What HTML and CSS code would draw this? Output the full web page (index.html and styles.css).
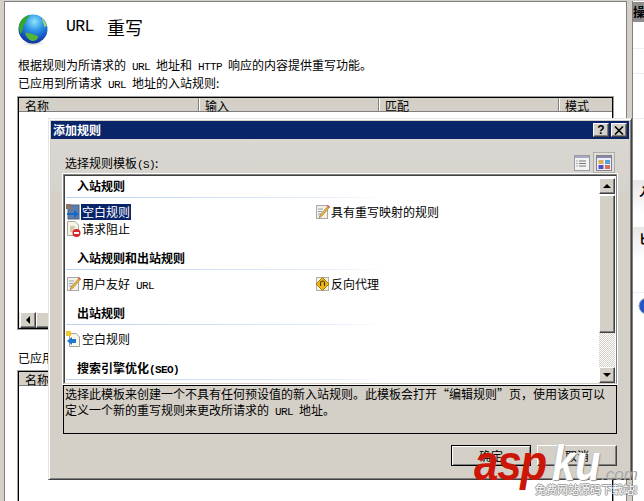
FILE: index.html
```html
<!DOCTYPE html>
<html lang="zh-CN">
<head>
<meta charset="utf-8">
<title>URL 重写</title>
<link rel="stylesheet" href="styles.css">
</head>
<body>
<div class="page">
  <main class="main">
    <header class="head">
      <svg class="globe" width="30" height="32" viewBox="0 0 30 32">
        <defs>
          <radialGradient id="gb" cx="0.55" cy="0.25" r="0.8">
            <stop offset="0" stop-color="#8fe4fa"/>
            <stop offset="0.4" stop-color="#2a95e6"/>
            <stop offset="0.8" stop-color="#1145b8"/>
            <stop offset="1" stop-color="#0b2a8c"/>
          </radialGradient>
          <radialGradient id="sh" cx="0.5" cy="0.5" r="0.5">
            <stop offset="0" stop-color="#777" stop-opacity=".5"/>
            <stop offset="1" stop-color="#999" stop-opacity="0"/>
          </radialGradient>
        </defs>
        <ellipse cx="15" cy="29" rx="12" ry="3" fill="url(#sh)"/>
        <circle cx="15" cy="15" r="14.5" fill="url(#gb)"/>
        <path d="M1.500 10C3 5 7 2 11 1C12 3 9 4 8 7C8 10 5 11 5 14C5 17 4 18 2.500 20C1 16 .5 13 1.500 10Z" fill="#35a62c"/>
        <path d="M7 19C11 18 16 21 20 22C21 25 17 27 14 27C11 26 8 23 7 19Z" fill="#52b53a"/>
        <path d="M24 4C26 6 28 9 29 12L26 13C27 10 24 8 24 4Z" fill="#a4d46c"/>
      </svg>
      <h1 class="title"><span class="lat-big">URL</span><span class="title-cn">重写</span></h1>
    </header>
    <p class="desc">根据规则为所请求的<span class="lat"> URL </span>地址和<span class="lat"> HTTP </span>响应的内容提供重写功能。</p>
    <p class="desc">已应用到所请求<span class="lat"> URL </span>地址的入站规则:</p>
    <section class="table table-top">
      <div class="thead">
        <div class="th th-a">名称</div>
        <div class="th th-b">输入</div>
        <div class="th th-c">匹配</div>
        <div class="th th-d">模式</div>
      </div>
      <div class="tbody"></div>
      <div class="hscroll">
        <div class="bevel hbtn"><span class="arrow-left"></span></div>
        <div class="bevel hthumb"></div>
      </div>
    </section>
    <p class="desc desc-second">已应用到所请求的出站规则:</p>
    <section class="table table-bottom">
      <div class="thead">
        <div class="th th-a">名称</div>
      </div>
    </section>
  </main>
  <div class="gutter"></div>
  <aside class="side">
    <div class="side-head">操作</div>
    <div class="side-row side-row-a"></div>
    <div class="side-row side-row-b"></div>
    <div class="side-row side-row-c"></div>
    <div class="side-band">入站</div>
    <div class="side-band side-band-b">匕</div>
    <div class="side-row side-row-d"></div>
    <svg class="side-dot" width="10" height="18" viewBox="0 0 10 18"><circle cx="9" cy="9" r="8" fill="#2456c8" stroke="#9ab" stroke-width="1"/></svg>
  </aside>
</div>

<div class="dialog">
  <div class="titlebar">
    <span class="dlg-title">添加规则</span>
    <div class="bevel tb-btn">?</div>
    <div class="bevel tb-btn tb-x">
      <svg width="10" height="9" viewBox="0 0 10 9"><path d="M1 0.500L9 8.500M9 0.500L1 8.500" stroke="#000" stroke-width="1.600"/></svg>
    </div>
  </div>
  <div class="dlg-body">
    <div class="pick-row">
      <span class="pick-label">选择规则模板<span class="lat">(S)</span>:</span>
      <div class="views">
        <div class="view">
          <svg width="16" height="16" viewBox="0 0 16 16"><rect x=".5" y=".5" width="15" height="15" fill="#f3f3f3" stroke="#9a9aa8"/><rect x="1" y="1" width="14" height="2" fill="#a8a8c0"/><path d="M5 6H12M5 8.500H12M5 11H12" stroke="#777"/><path d="M2 6H4M2 8.500H4M2 11H4" stroke="#aaa"/></svg>
        </div>
        <div class="view view-on">
          <svg width="16" height="16" viewBox="0 0 16 16"><rect x=".5" y=".5" width="15" height="15" fill="#eef" stroke="#80808f"/><rect x="1" y="1" width="14" height="2" fill="#8888a8"/><rect x="2.500" y="5" width="5" height="4" fill="#d8b050"/><rect x="9" y="5" width="5" height="4" fill="#58a0d8"/><rect x="2.500" y="10" width="5" height="4" fill="#5050c0"/><rect x="9" y="10" width="5" height="4" fill="#d87050"/></svg>
        </div>
      </div>
    </div>
    <div class="listbox">
      <div class="list">
        <h2 class="sec">入站规则</h2>
        <div class="items">
          <div class="item">
            <svg class="ico" width="15" height="16" viewBox="0 0 15 16"><rect x="2" y="1" width="11" height="14" fill="#5f7ca8" stroke="#4b5f80"/><rect x="0" y="0" width="5" height="5" fill="#8a7560"/><path d="M1 9H8V6L13 10L8 14V11H1Z" fill="#1569c7"/></svg>
            <span class="item-text is-selected">空白规则</span>
          </div>
          <div class="item">
            <svg class="ico" width="15" height="16" viewBox="0 0 15 16"><path d="M1.500 .5H9L12.500 4V14.500H1.500Z" fill="#f8f4e4" stroke="#a8a8a0"/><path d="M4 6H9M4 8H8M4 10H7" stroke="#b09a70"/><circle cx="10.500" cy="12" r="4" fill="#d8242c"/><rect x="8" y="11" width="5" height="2" fill="#fff"/></svg>
            <span class="item-text">请求阻止</span>
          </div>
          <div class="item item-right item-first">
            <svg class="ico" width="15" height="16" viewBox="0 0 15 16"><rect x="1.500" y="1.500" width="11" height="13" fill="#f5f2e4" stroke="#a8a8b0"/><path d="M3 5H8M3 7.500H7M3 10H6" stroke="#8aa0c0"/><path d="M13 2L14.500 3.500L7 12L4 14L5 11Z" fill="#e8b040" stroke="#807040" stroke-width=".5"/><path d="M12.500 1.500L14.500 3.500" stroke="#e04848" stroke-width="1.500"/></svg>
            <span class="item-text">具有重写映射的规则</span>
          </div>
        </div>
        <h2 class="sec">入站规则和出站规则</h2>
        <div class="items">
          <div class="item">
            <svg class="ico" width="15" height="16" viewBox="0 0 15 16"><rect x="1.500" y="1.500" width="11" height="13" fill="#f5f2e4" stroke="#a8a8b0"/><path d="M3 5H8M3 7.500H7M3 10H6" stroke="#8aa0c0"/><path d="M13 2L14.500 3.500L7 12L4 14L5 11Z" fill="#e8b040" stroke="#807040" stroke-width=".5"/><path d="M12.500 1.500L14.500 3.500" stroke="#e04848" stroke-width="1.500"/></svg>
            <span class="item-text">用户友好<span class="lat"> URL</span></span>
          </div>
          <div class="item item-right">
            <svg class="ico" width="15" height="16" viewBox="0 0 15 16"><rect x="1.500" y="1.500" width="12" height="13" fill="#f5f2e4" stroke="#b0b0a8"/><path d="M7.500 1.500L14 8L7.500 14.500L1 8Z" fill="#f0b818" stroke="#a07810"/><path d="M5.500 10V7A2 2 0 0 1 9.500 7V10" fill="none" stroke="#503808" stroke-width="1.200"/></svg>
            <span class="item-text">反向代理</span>
          </div>
        </div>
        <h2 class="sec">出站规则</h2>
        <div class="items">
          <div class="item">
            <svg class="ico" width="15" height="16" viewBox="0 0 15 16"><path d="M3.500 2.500H10L13.500 6V15.500H3.500Z" fill="#faf8e8" stroke="#a0a0a0"/><rect x="0" y="0" width="5" height="5" fill="#f0c830"/><path d="M10 8H6V6L1 10L6 14V12H10Z" fill="#1c78d0"/></svg>
            <span class="item-text">空白规则</span>
          </div>
        </div>
        <h2 class="sec">搜索引擎优化<span class="lat lat-bold">(SEO)</span></h2>
      </div>
      <div class="vscroll">
        <div class="bevel vbtn"><span class="arrow-up"></span></div>
        <div class="bevel vthumb"></div>
        <div class="vtrack"></div>
        <div class="bevel vbtn"><span class="arrow-down"></span></div>
      </div>
    </div>
    <div class="info">
      <p class="info-line">选择此模板来创建一个不具有任何预设值的新入站规则。此模板会打开“编辑规则”页&#xFF0C;使用该页可以</p>
      <p class="info-line">定义一个新的重写规则来更改所请求的<span class="lat"> URL </span>地址。</p>
    </div>
    <div class="actions">
      <button class="btn btn-default">确定</button>
      <button class="btn">取消</button>
    </div>
  </div>
</div>

<div class="mark">
  <span class="mark-red">asp</span>
  <span class="mark-white">ku</span>
  <span class="mark-com">.com</span>
  <div class="mark-sub">免费网站源码下载站!</div>
</div>
</body>
</html>
```
FILE: styles.css
```css
* { box-sizing: border-box; }
html, body { margin: 0; padding: 0; }
body {
  width: 644px;
  height: 501px;
  overflow: hidden;
  background: #d4d0c8;
  font: 12px/16px "Noto Sans CJK SC", "Noto Sans CJK JP", sans-serif;
  color: #000;
  position: relative;
}
.lat { font-family: "Liberation Mono", monospace; font-size: 11px; letter-spacing: -0.600px; }
.lat-bold { font-weight: 700; }
.page {
  display: flex;
  height: 501px;
  padding: 1px 0 0 4px;
}
.main {
  width: 623px;
  flex: none;
  background: #fff;
  border: 1px solid #808080;
  border-bottom: 0;
  padding: 12px 0 0 13px;
  overflow: hidden;
}
.head { display: flex; align-items: flex-start; height: 43px; }
.globe { flex: none; }
.title {
  margin: 1px 0 0 18px;
  font-size: 18px;
  line-height: 24px;
  font-weight: 400;
  display: flex;
}
.lat-big { font-family: "Liberation Mono", monospace; font-size: 16.500px; letter-spacing: -0.600px; }
.title-cn { margin-left: 13px; }
.desc { margin: 0 0 2px; height: 16px; white-space: pre; }
.table {
  width: 595px;
  margin-top: 6px;
  border: 1px solid #000;
  outline: 1px solid #a0a0a0;
}
.table-top { height: 232px; display: flex; flex-direction: column; }
.table-bottom { margin-top: 5px; height: 140px; border-bottom: 0; }
.desc-second { margin-top: 21px; }
.thead {
  display: flex;
  height: 14px;
  flex: none;
  background: #d4d0c8;
  border-bottom: 1px solid #808080;
  line-height: 15px;
}
.th { padding-left: 6px; border-right: 1px solid #808080; box-shadow: 1px 0 0 #fff; }
.th-a { width: 180px; }
.th-b { width: 180px; }
.th-c { width: 180px; }
.th-d { flex: 1; border-right: 0; box-shadow: none; }
.tbody { flex: 1; }
.hscroll { display: flex; height: 16px; background: #e8e6e0; flex: none; padding-left: 1px; }
.bevel {
  background: #d4d0c8;
  border: 1px solid;
  border-color: #fff #404040 #404040 #fff;
  box-shadow: inset -1px -1px 0 #808080;
  display: flex;
  align-items: center;
  justify-content: center;
}
.hbtn { width: 16px; height: 16px; }
.hthumb { width: 60px; height: 16px; }
.arrow-left { border: 4px solid transparent; border-right: 4px solid #000; border-left: 0; }
.arrow-up { border: 4px solid transparent; border-bottom: 4px solid #000; border-top: 0; }
.arrow-down { border: 4px solid transparent; border-top: 4px solid #000; border-bottom: 0; }

.gutter {
  width: 6px;
  flex: none;
  border-right: 1px solid #808080;
}
.side {
  flex: 1;
  background: #fff;
  position: relative;
  overflow: hidden;
}
.side-head {
  height: 20px;
  margin-top: 1px;
  background: #8c8c8c;
  font-weight: 700;
  line-height: 20px;
  white-space: nowrap;
}
.side-row { height: 1px; background: #eee; }
.side-row-a { margin-top: 26px; }
.side-row-b { margin-top: 24px; }
.side-row-c { margin-top: 44px; }
.side-row-d { margin-top: 31px; }
.side-band {
  margin-top: 61px;
  height: 34px;
  background: linear-gradient(#e9e6e6, #fff);
  font-weight: 700;
  white-space: nowrap;
  padding: 4px 0 0 6px;
}
.side-band-b { margin-top: 13px; }
.side-dot { position: absolute; left: 5px; top: 296px; }

.dialog {
  position: absolute;
  left: 48px;
  top: 118px;
  width: 584px;
  height: 362px;
  background: #d4d0c8;
  border: 1px solid;
  border-color: #e8e6e2 #404040 #404040 #e8e6e2;
  box-shadow: inset 1px 1px 0 #fff, inset -1px -1px 0 #808080;
  padding: 2px 2px 1px 2px;
  display: flex;
  flex-direction: column;
}
.titlebar {
  height: 18px;
  flex: none;
  background: #0a246a;
  display: flex;
  align-items: center;
  gap: 2px;
  padding: 0 2px 0 2px;
}
.dlg-title { color: #fff; font-weight: 700; flex: 1; }
.tb-btn { width: 16px; height: 14px; font: 700 12px/12px "Liberation Sans", sans-serif; }
.dlg-body {
  flex: 1;
  padding: 14px 12px 0 12px;
  display: flex;
  flex-direction: column;
  background: linear-gradient(#dad6d1, #d6d2cc 50px, #d4d0c8 60px);
}
.pick-row {
  display: flex;
  align-items: flex-start;
  justify-content: space-between;
  height: 21px;
}
.pick-label { padding: 2px 0 0 2px; }
.views { display: flex; align-items: center; gap: 3px; margin: -1px 2px 0 0; }
.view { width: 17px; height: 21px; display: flex; align-items: center; justify-content: center; }
.view-on { width: 22px; background: #e2dfd9; outline: 1px solid #b0aea8; outline-offset: -1px; }
.listbox {
  height: 210px;
  flex: none;
  display: flex;
  background: #fff;
  border: 1px solid #808080;
  border-bottom-color: #d4d0c8;
  box-shadow: inset 1px 1px 0 #404040;
  outline: 1px solid #fff;
  overflow: hidden;
  padding: 3px 1px 0 2px;
}
.list { flex: 1; min-width: 0; overflow: hidden; }
.sec {
  margin: 0;
  height: 20px;
  padding-left: 11px;
  font-size: 12px;
  line-height: 16px;
  font-weight: 700;
  border-bottom: 1px solid;
  border-image: linear-gradient(90deg, #b9d0f0, #e6eefb 50%, #fff 60%) 1;
  white-space: pre;
}
.items {
  margin: 6px 0 12px;
  display: grid;
  grid-template-columns: 249px 1fr;
  grid-auto-rows: 17px;
}
.item { display: flex; align-items: flex-start; grid-column: 1; white-space: pre; line-height: 16px; }
.item-right { grid-column: 2; grid-row: 1; }
.ico { flex: none; }
.item-text { padding: 0 1px; height: 16px; }
.is-selected { background: #0a246a; color: #fff; }
.vscroll { width: 16px; flex: none; display: flex; flex-direction: column; height: 205px; }
.vbtn { height: 16px; flex: none; }
.vthumb { height: 138px; flex: none; margin-top: 1px; }
.vtrack {
  flex: 1;
  background-image: repeating-conic-gradient(#d4d0c8 0 25%, #fff 0 50%);
  background-size: 2px 2px;
}
.info {
  height: 49px;
  flex: none;
  margin-top: 1px;
  border: 1px solid #000;
  padding: 0 0 0 1px;
}
.info-line { margin: 0; height: 16px; white-space: pre; }
.actions {
  display: flex;
  justify-content: flex-end;
  gap: 6px;
  margin-top: 11px;
}
.btn {
  width: 80px;
  height: 21px;
  padding: 0;
  font: inherit;
  color: #000;
  background: #d4d0c8;
  border: 1px solid;
  border-color: #fff #404040 #404040 #fff;
  box-shadow: inset -1px -1px 0 #808080;
}
.btn-default { border-color: #000; box-shadow: inset 1px 1px 0 #fff, inset -1px -1px 0 #808080; }

.mark {
  position: absolute;
  left: 474px;
  top: 437px;
  width: 170px;
  height: 64px;
  pointer-events: none;
  font: italic 700 50px/50px "Liberation Sans", sans-serif;
  white-space: nowrap;
}
.mark-red, .mark-white, .mark-com { position: absolute; transform-origin: left bottom; }
.mark-red { left: 0; top: 1px; color: #cc1708; letter-spacing: -1.500px; transform: scaleX(.88); }
.mark-white {
  left: 78px;
  top: 1px;
  color: #fff;
  transform: scaleX(.83);
  text-shadow: 1px 1px 1px #999, -1px 0 1px #bbb;
}
.mark-com { left: 127px; top: 29px; color: #a8a8a8; font-size: 17px; line-height: 17px; font-weight: 400; }
.mark-sub {
  position: absolute;
  left: 61px;
  top: 45px;
  font-size: 11px;
  font-style: normal;
  font-weight: 400;
  font-family: "Noto Sans CJK SC", sans-serif;
  line-height: 14px;
  color: #fff;
  text-shadow: 1px 0 #999, -1px 0 #999, 0 1px #999, 0 -1px #999;
}
```
